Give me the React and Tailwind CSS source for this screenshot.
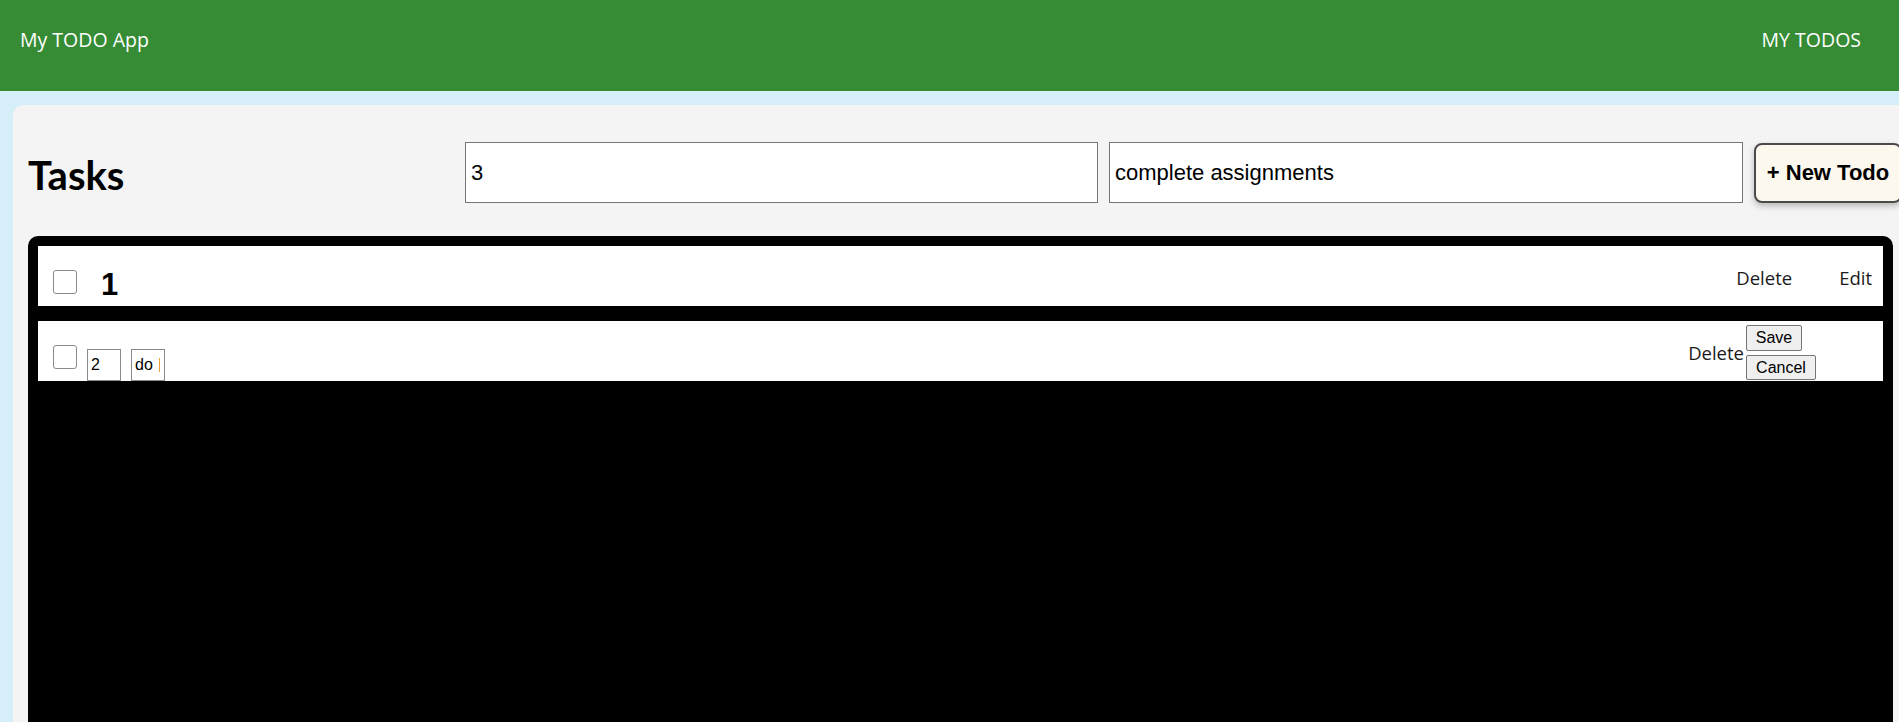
import React, { useState } from "react";

const todos = [
  { id: 1, title: "1", desc: "", editing: false },
  { id: 2, title: "2", desc: "do", editing: true },
];

const TodoRow = ({ todo }) => {
  if (todo.editing) {
    return (
      <div className="flex h-[60px] justify-between bg-white">
        <div className="flex items-start">
          <input
            type="checkbox"
            className="ml-[15px] mt-[24px] h-6 w-6 appearance-none rounded-[3px] border border-[#8a8a8a] bg-white"
          />
          <input
            defaultValue={todo.title}
            className="ml-[10px] mt-[28px] h-[32px] w-[34px] border border-[#8a8a8a] px-[3px] font-['Liberation_Sans',Arial,sans-serif] text-[16px] text-black outline-none"
          />
          <div className="relative ml-[10px] mt-[28px]">
            <input
              defaultValue={todo.desc}
              className="h-[32px] w-[34px] border border-[#8a8a8a] px-[3px] font-['Liberation_Sans',Arial,sans-serif] text-[16px] text-black outline-none"
            />
            <span className="absolute left-[28px] top-[9px] h-[14px] w-px bg-[#f0a030]" />
          </div>
        </div>
        <div className="mr-[67px] flex items-center self-end pb-px font-['Open_Sans',sans-serif] text-[18.5px] text-[#1a1a1a]">
          <span className="mr-[2px]">Delete</span>
          <div className="flex flex-col gap-[4px] font-['Liberation_Sans',Arial,sans-serif] text-[16px] text-black">
            <button className="h-[26px] w-[56px] rounded-[2px] border border-[#767676] bg-[#efefef]">
              Save
            </button>
            <button className="h-[25px] w-[70px] rounded-[2px] border border-[#767676] bg-[#efefef]">
              Cancel
            </button>
          </div>
        </div>
      </div>
    );
  }

  return (
    <div className="flex h-[60px] justify-between bg-white">
      <div className="flex items-start">
        <input
          type="checkbox"
          className="ml-[15px] mt-[24px] h-6 w-6 appearance-none rounded-[3px] border border-[#8a8a8a] bg-white"
        />
        <h2 className="ml-[24px] mt-[23px] font-['Liberation_Sans',Arial,sans-serif] text-[31px] font-bold leading-none text-black">
          {todo.title}
        </h2>
      </div>
      <div className="mr-[11px] mt-[19px] flex gap-[47px] font-['Open_Sans',sans-serif] text-[18.5px] leading-[26px] text-[#1a1a1a]">
        <span>Delete</span>
        <span>Edit</span>
      </div>
    </div>
  );
};

export default function App() {
  const [title, setTitle] = useState("3");
  const [desc, setDesc] = useState("complete assignments");

  return (
    <div className="min-h-screen overflow-hidden bg-[#d5eef8]">
      <header className="flex h-[91px] justify-between bg-[#368b35] pl-[20px] pr-[38px] pt-[27px] font-['Open_Sans',sans-serif] text-[19.5px] leading-[26px] text-white">
        <span>My TODO App</span>
        <span>MY TODOS</span>
      </header>

      <main className="ml-[13px] mt-[14px] w-[1895px] rounded-tl-[10px] bg-[#f4f4f4] px-[15px] pt-[37px]">
        <div className="-mr-[9px] flex h-[61px] items-center">
          <h1 className="flex-1 pt-[4px] font-['Lato',sans-serif] text-[40px] font-bold leading-none text-black">
            Tasks
          </h1>
          <input
            value={title}
            onChange={(e) => setTitle(e.target.value)}
            className="h-[61px] w-[633px] border border-[#767676] bg-white px-[5px] font-['Liberation_Sans',Arial,sans-serif] text-[22px] text-black outline-none"
          />
          <input
            value={desc}
            onChange={(e) => setDesc(e.target.value)}
            className="ml-[11px] h-[61px] w-[634px] border border-[#767676] bg-white px-[5px] font-['Liberation_Sans',Arial,sans-serif] text-[22px] text-black outline-none"
          />
          <button className="ml-[11px] h-[60px] w-[148px] shrink-0 rounded-[8px] border-2 border-[#4a4a4a] bg-[#fdf8ee] font-['Liberation_Sans',Arial,sans-serif] text-[22px] font-bold text-black shadow-[0_3px_6px_rgba(0,0,0,0.25)]">
            + New Todo
          </button>
        </div>

        <div className="mt-[33px] flex h-[600px] flex-col gap-[15px] rounded-[10px] bg-black p-[10px]">
          {todos.map((todo) => (
            <TodoRow key={todo.id} todo={todo} />
          ))}
        </div>
      </main>
    </div>
  );
}
